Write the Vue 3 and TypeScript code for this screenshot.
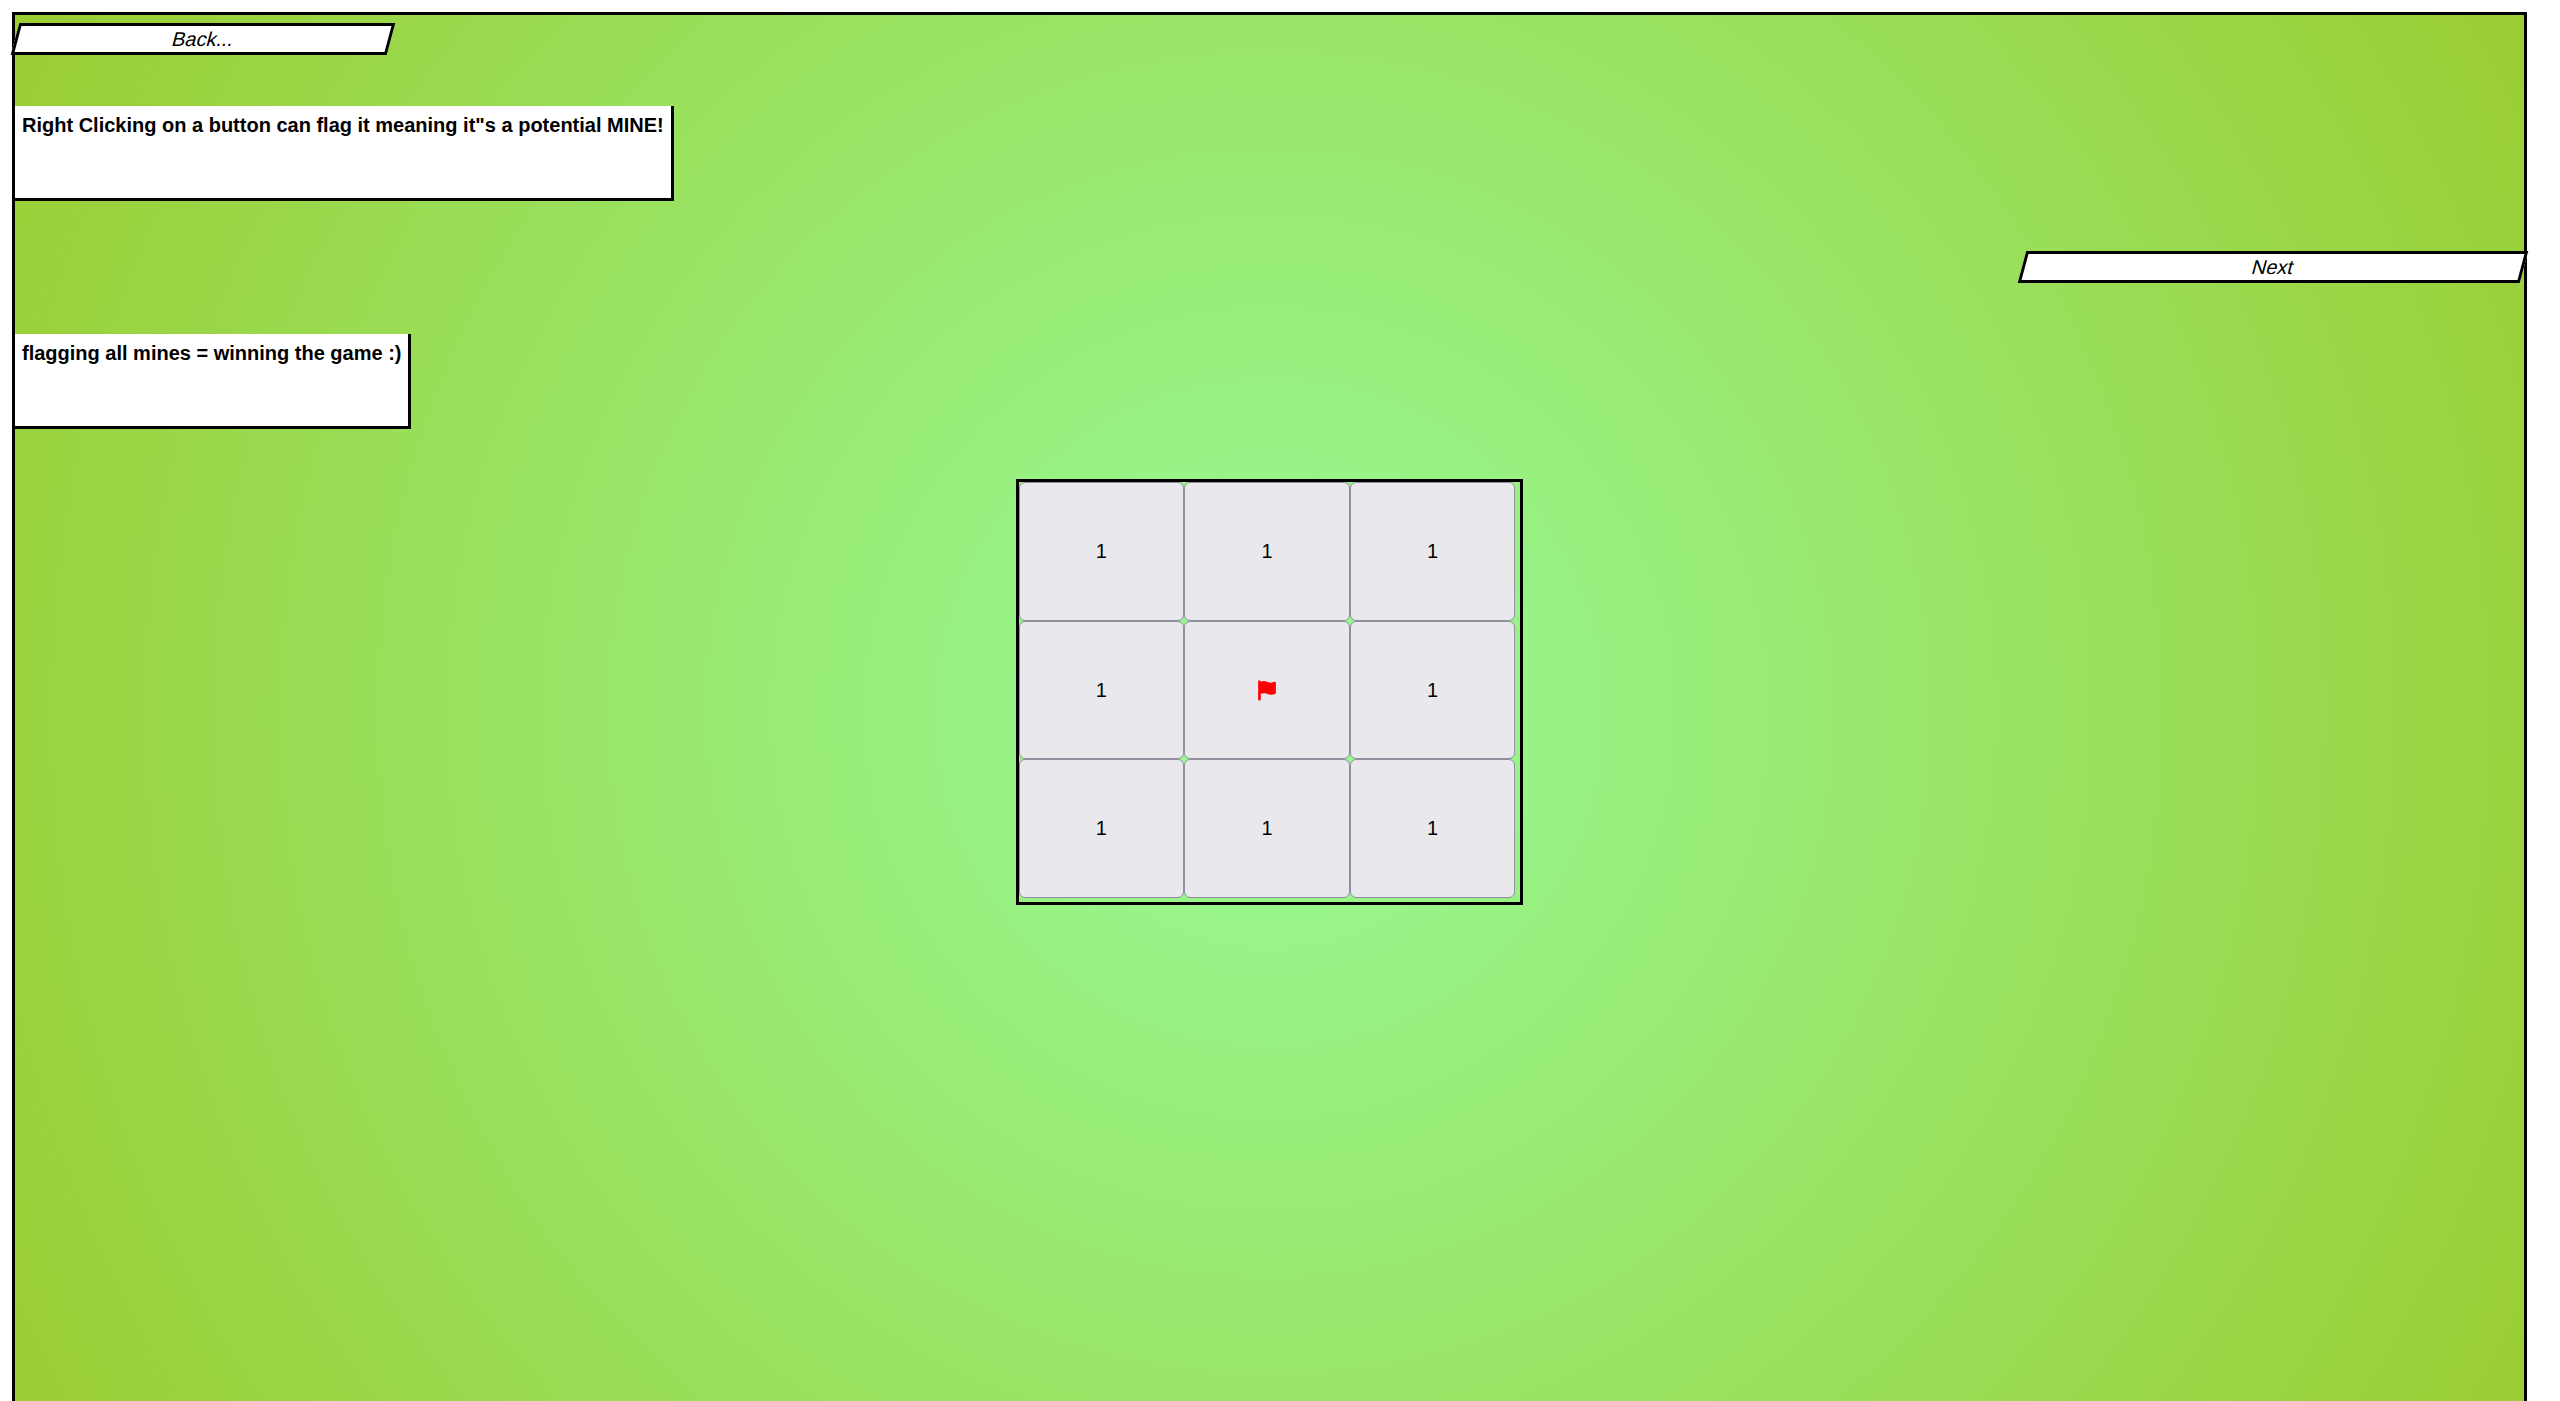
<script setup lang="ts">
import { ref } from 'vue'

interface Cell {
  id: number
  value: string
  flagged: boolean
}

const cells = ref<Cell[]>(
  Array.from({ length: 9 }, (_, id) => ({ id, value: '1', flagged: id === 4 })),
)
</script>

<template>
  <div class="page">
    <main class="tutorial">
      <button type="button" class="nav back">Back...</button>
      <p class="tip">Right Clicking on a button can flag it meaning it"s a potential MINE!</p>
      <button type="button" class="nav next">Next</button>
      <p class="tip">flagging all mines = winning the game :)</p>
      <div class="board">
        <button
          v-for="cell in cells"
          :key="cell.id"
          type="button"
          class="cell"
          :aria-label="cell.flagged ? 'Flag' : cell.value"
        >
          <svg v-if="cell.flagged" class="flag" viewBox="0 0 60 64" aria-hidden="true">
            <path
              d="M3 4.500Q3 1 7 1Q10.500 1 10.500 5Q18 2 25 4Q34 8 43 8Q48 8 53 5.500Q57 4 57 8V40Q57 42 54 43Q45 47 36 44Q22 38 11 42V59Q11 63 7 63Q3 63 3 59Z"
            />
          </svg>
          <template v-else>{{ cell.value }}</template>
        </button>
      </div>
    </main>
  </div>
</template>

<style>
html,
body {
  margin: 0;
  background: #fff;
}
</style>

<style scoped>
.page {
  box-sizing: border-box;
  height: 100vh;
  padding: 12px 33px 0 12px;
  overflow: hidden;
  font-family: 'Liberation Sans', Arial, sans-serif;
  font-size: 20px;
  color: #000;
}

.tutorial {
  box-sizing: border-box;
  display: flex;
  flex-direction: column;
  align-items: flex-start;
  gap: 50px;
  height: 100vh;
  padding-top: 8px;
  border: 3px solid #000;
  background: radial-gradient(circle, palegreen, yellowgreen);
}

button {
  margin: 0;
  padding: 0;
  font: inherit;
  color: inherit;
}

.nav {
  box-sizing: border-box;
  flex: none;
  height: 32px;
  border: 3px solid #000;
  background: #fff;
  line-height: 24px;
  transform: skewX(-15deg);
}

.back {
  width: 15%;
}

.next {
  width: 20%;
  align-self: flex-end;
}

.tip {
  box-sizing: border-box;
  flex: none;
  height: 95px;
  margin: 1px 0 0;
  padding: 7px;
  border: solid #000;
  border-width: 0 3px 3px 0;
  background: #fff;
  font-weight: bold;
  line-height: 24px;
}

.board {
  display: grid;
  flex: none;
  grid-template-columns: repeat(3, 33%);
  grid-template-rows: repeat(3, 33%);
  align-self: center;
  width: 20%;
  height: 30vh;
  border: 3px solid #000;
}

.cell {
  display: flex;
  align-items: center;
  justify-content: center;
  border: 1px solid #8f8f9d;
  border-radius: 6px;
  background: #e9e9ed;
}

.flag {
  width: 20px;
  height: 21px;
  fill: red;
}
</style>
